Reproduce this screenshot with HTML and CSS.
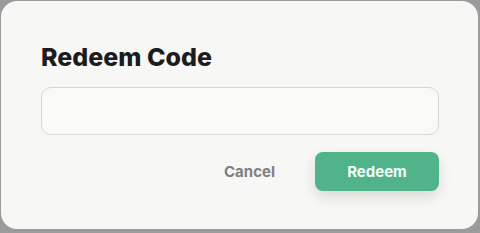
FILE: index.html
```html
<!DOCTYPE html>
<html lang="en">
<head>
    <meta charset="UTF-8">
    <meta name="viewport" content="width=device-width, initial-scale=1.0">
    <title>Redeem Code</title>
    <link rel="stylesheet" href="styles.css">
</head>
<body>
    <div class="dialog">
        <h2 class="dialog-title">Redeem Code</h2>
        <input type="text" class="code-input" id="codeInput">
        <div class="dialog-actions">
            <button class="btn-cancel">Cancel</button>
            <button class="btn-redeem">Redeem</button>
        </div>
    </div>
</body>
</html>
```

FILE: styles.css
```css
body {
    font-family: Inter, "Noto Sans", sans-serif;
    background: #9b9b9b;
    margin: 0;
    padding: 1px 2px 4px 1px;
    height: 233px;
    box-sizing: border-box;
}

.dialog {
    background: #f7f7f6;
    border-radius: 16px;
    height: 228px;
    box-sizing: border-box;
    padding: 42px 39px 0 40px;
}

.dialog-title {
    margin: 0;
    font-size: 25px;
    font-weight: 800;
    color: #1c1c1c;
    line-height: 28px;
}

.code-input {
    display: block;
    width: 100%;
    box-sizing: border-box;
    height: 48px;
    margin-top: 16px;
    border: 1px solid #d6d6d4;
    border-radius: 10px;
    background: #f9f9f8;
    outline: none;
}

.dialog-actions {
    display: flex;
    justify-content: flex-end;
    align-items: center;
    gap: 40px;
    margin-top: 17px;
}

button {
    font-family: Inter, "Noto Sans", sans-serif;
    font-size: 15px;
    font-weight: 700;
    border: none;
    cursor: pointer;
}

.btn-cancel {
    background: none;
    color: #7f7f7f;
    padding: 0;
}

.btn-redeem {
    background: #50b38a;
    color: #f4fff8;
    width: 124px;
    height: 39px;
    border-radius: 8px;
    box-shadow: 0 6px 14px rgba(0, 0, 0, 0.12);
}
```
